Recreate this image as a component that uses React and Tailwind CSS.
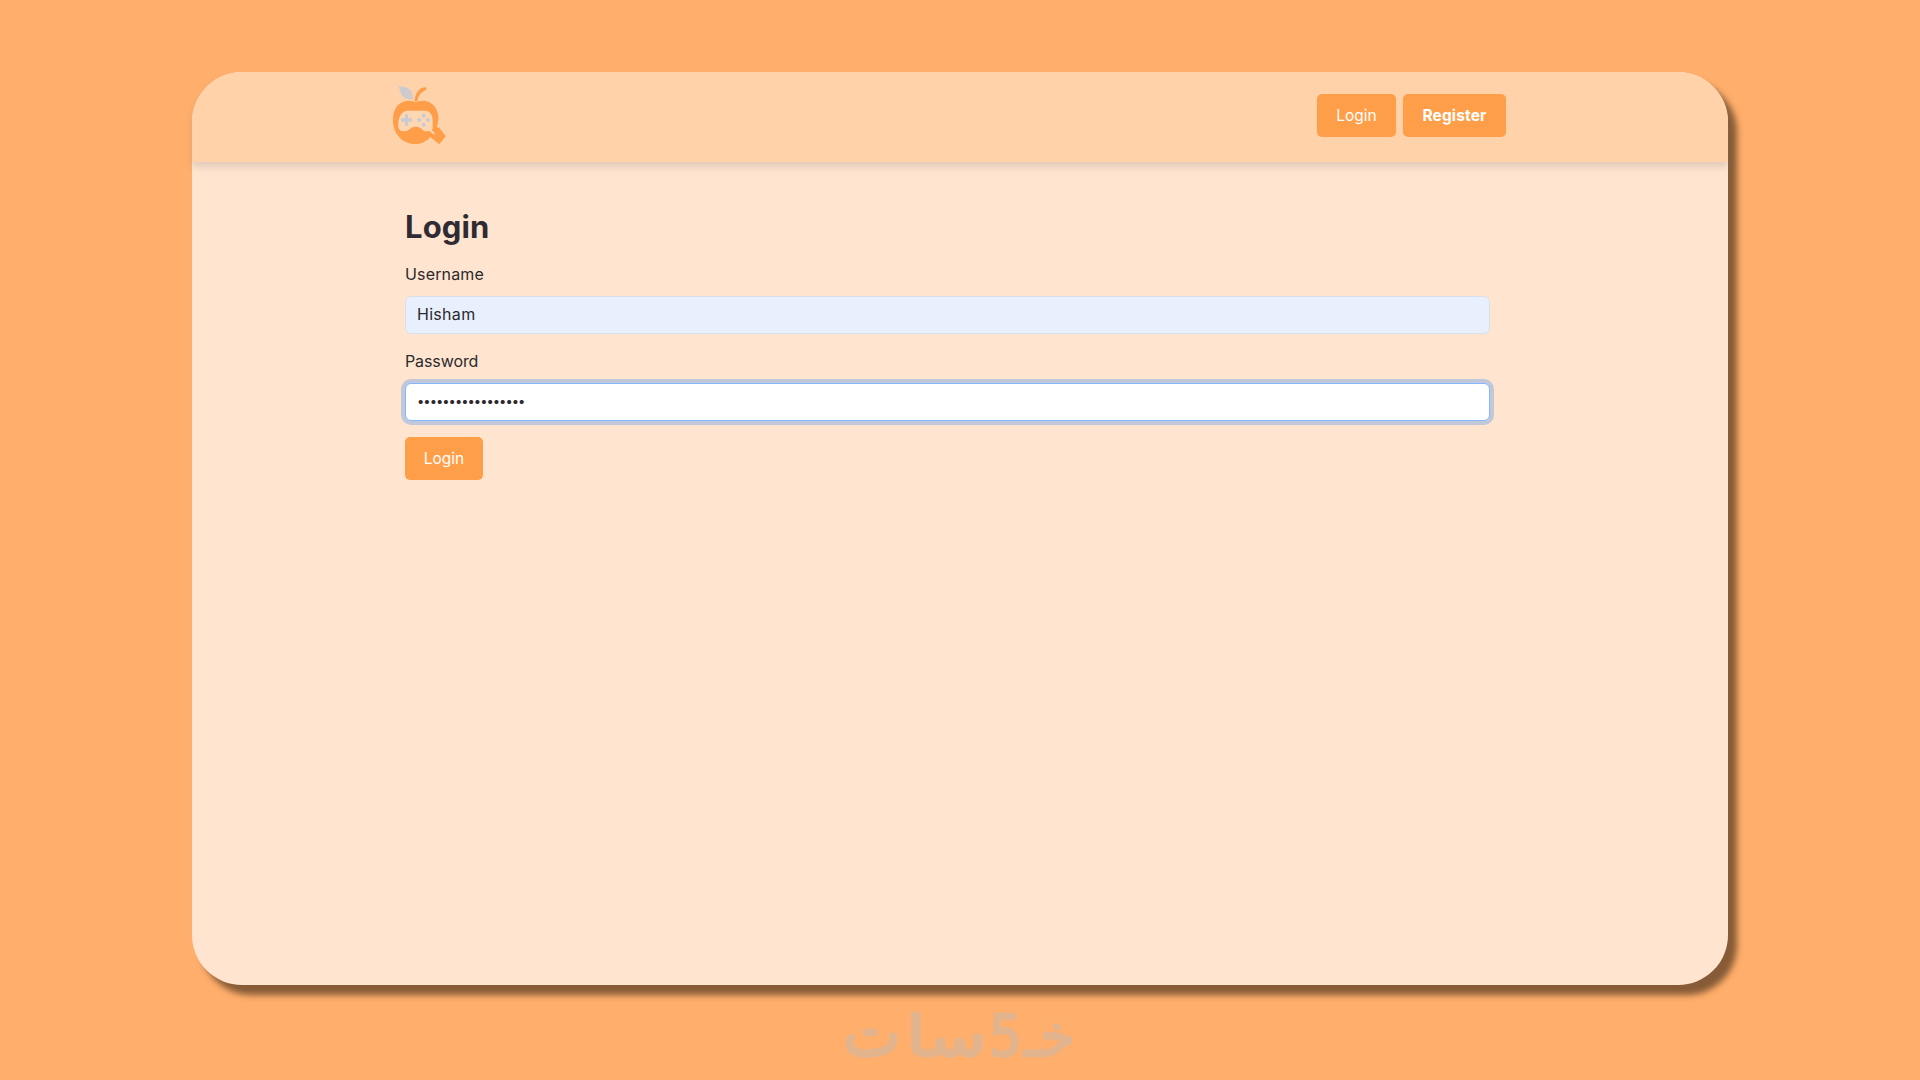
import React, { useState } from "react";

const Logo = () => (
  <svg viewBox="36 30 162 177" className="w-[54px] h-[59px]">
    <path
      d="M54 33C66 29 84 33 91 43C98 51 99 62 99 70C84 70 73 67 66 59C61 53 63 41 54 33Z"
      fill="#c9cbd3"
    />
    <path d="M75 47L95 65" stroke="#ffc79a" strokeWidth="3" />
    <path
      d="M104 75C105 54 116 37 133 34C139 33 142 39 138 42C124 48 115 57 112 75Z"
      fill="#ff9e48"
    />
    <path
      d="M78 75C90 72 98 77 107 77C116 77 126 72 137 75C160 80 175 100 175 126C175 137 173 146 170 154L178 155L197 181L178 205L151 183C140 196 125 204 107 204C67 204 39 174 39 131C39 102 52 80 78 75Z"
      fill="#ff9e48"
    />
    <path
      d="M78 104H136C151 105 158 118 158 134V158C156 163 148 166 138 166C131 166 127 160 121 156C112 151 101 151 92 157C86 162 81 166 74 166C64 166 57 163 56 157C53 146 54 111 78 104Z"
      fill="#ffd6b2"
    />
    <path
      d="M151 163L161 172"
      stroke="#ffd6b2"
      strokeWidth="6"
      strokeLinecap="round"
    />
    <path
      d="M75 115H84V127H96V137H84V149H75V137H63V127H75Z"
      fill="#c9cbd3"
    />
    <circle cx="131" cy="119" r="6" fill="#c9cbd3" />
    <circle cx="131" cy="146" r="6" fill="#c9cbd3" />
    <circle cx="118" cy="132" r="6" fill="#c9cbd3" />
    <circle cx="144" cy="132" r="6" fill="#c9cbd3" />
  </svg>
);

const Wordmark = () => (
  <svg
    viewBox="0 0 230 50"
    className="w-[230px] h-[50px] overflow-visible font-['DejaVu_Sans']"
    fill="#e2b48d"
    stroke="#e2b48d"
    strokeWidth="2.6"
  >
    <text x="179" y="46" fontSize="58" textLength="51" lengthAdjust="spacingAndGlyphs">
      خـ
    </text>
    <text x="144" y="46" fontSize="57" textLength="33" lengthAdjust="spacingAndGlyphs">
      5
    </text>
    <text x="61" y="46" fontSize="56" textLength="81" lengthAdjust="spacingAndGlyphs">
      سا
    </text>
    <text x="-2" y="46" fontSize="66" textLength="58" lengthAdjust="spacingAndGlyphs">
      ت
    </text>
  </svg>
);

const Login = () => {
  const [formData, setFormData] = useState({
    username: "Hisham",
    password: "12345678901234567",
  });

  const handleChange = (e) => {
    setFormData({ ...formData, [e.target.name]: e.target.value });
  };

  return (
    <form
      onSubmit={(e) => e.preventDefault()}
      className="ml-[213px] w-[1085px] pt-11"
    >
      <h2 className="h-[48px] text-[31px] leading-[42px] font-bold tracking-[0.1px] text-[#302b33]">
        Login
      </h2>
      <label
        htmlFor="username"
        className="block h-[42px] pt-2 text-[16px] leading-6 tracking-[0.15px]"
      >
        Username
      </label>
      <input
        id="username"
        type="text"
        name="username"
        value={formData.username}
        onChange={handleChange}
        className="block w-full h-[38px] px-[11px] pb-0.5 text-[16px] tracking-[0.3px] rounded-md border border-[#d9dfe8] bg-[#e8f0fe] outline-none"
      />
      <label
        htmlFor="password"
        className="block h-[49px] pt-[15px] text-[16px] leading-6 tracking-[-0.1px]"
      >
        Password
      </label>
      <input
        id="password"
        type="password"
        name="password"
        value={formData.password}
        onChange={handleChange}
        className="block w-full h-[38px] px-[11px] pb-[3px] text-[13px] tracking-[-1px] rounded-md border border-[#86b7fe] bg-white outline-none ring-4 ring-[#c0c8d9]"
      />
      <button
        type="submit"
        className="mt-4 w-[78px] h-[43px] rounded-[5px] bg-[#ff9e48] text-[15.5px] text-white"
      >
        Login
      </button>
    </form>
  );
};

const App = () => {
  return (
    <div className="h-[1080px] overflow-hidden bg-[#ffae6b] pt-[72px] font-['Inter',sans-serif] text-[#2b292e]">
      <div className="mx-auto w-[1536px] h-[913px] rounded-[50px] bg-[#ffe5cf] shadow-[9px_10px_6px_#875b37]">
        <header className="flex h-[90px] items-start justify-between rounded-t-[50px] bg-[#ffd2aa] pt-[14px] pl-[200px] pr-[222px] shadow-[0_5px_6px_rgba(140,130,130,0.25)]">
          <Logo />
          <nav className="mt-2 flex gap-[7px]">
            <button className="w-[79px] h-[43px] rounded-[5px] bg-[#ff9e48] text-[15.5px] text-white">
              Login
            </button>
            <button className="w-[103px] h-[43px] rounded-[5px] bg-[#ff9e48] text-[15.5px] font-bold tracking-[0.15px] text-white">
              Register
            </button>
          </nav>
        </header>
        <Login />
      </div>
      <div className="mt-[25px] flex justify-center">
        <Wordmark />
      </div>
    </div>
  );
};

export default App;
